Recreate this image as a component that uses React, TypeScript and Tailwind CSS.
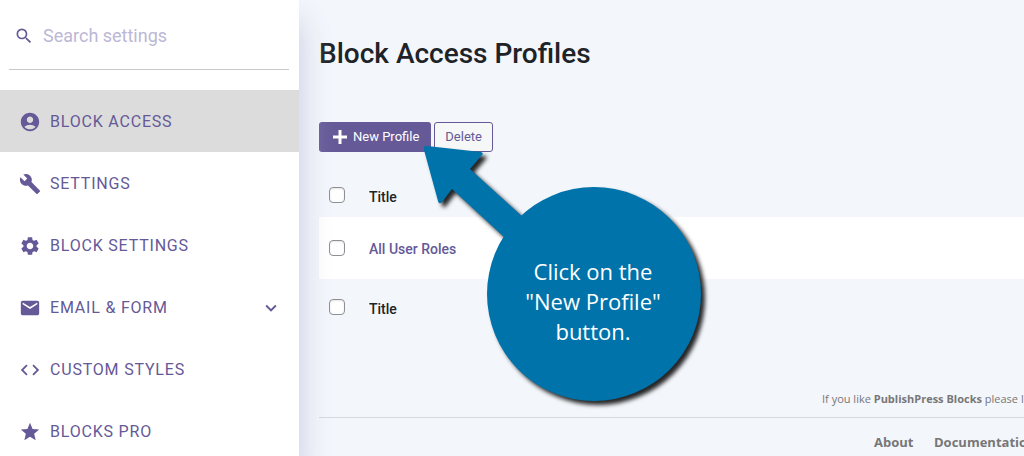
import type { IconType } from 'react-icons';
import {
    MdAccountCircle,
    MdBuild,
    MdCode,
    MdEmail,
    MdExpandMore,
    MdSearch,
    MdSettings,
    MdStar,
} from 'react-icons/md';
import clsx from 'clsx';

interface MenuItem {
    label: string;
    icon: IconType;
    active?: boolean;
    expandable?: boolean;
}

const menu: MenuItem[] = [
    { label: 'BLOCK ACCESS', icon: MdAccountCircle, active: true },
    { label: 'SETTINGS', icon: MdBuild },
    { label: 'BLOCK SETTINGS', icon: MdSettings },
    { label: 'EMAIL & FORM', icon: MdEmail, expandable: true },
    { label: 'CUSTOM STYLES', icon: MdCode },
    { label: 'BLOCKS PRO', icon: MdStar },
];

function Sidebar() {
    return (
        <aside className="relative z-10 w-[299px] shrink-0 bg-white text-[#655997] shadow-[0_20px_30px_#c8cae0]">
            <label className="mr-[10px] mb-5 ml-[9px] flex h-[70px] items-center gap-[9px] border-b border-[#c8c8c8] pt-0.5 pl-[5px]">
                <MdSearch className="size-5 shrink-0" />
                <input
                    type="search"
                    aria-label="Search settings"
                    placeholder="Search settings"
                    className="w-full min-w-0 bg-transparent text-lg outline-hidden placeholder:text-[#bcb7d6]"
                />
            </label>

            <nav>
                {menu.map(({ label, icon: Icon, active, expandable }) => (
                    <a
                        key={label}
                        href="#"
                        className={clsx(
                            'flex h-[62px] items-center gap-[9px] pt-px pr-[17px] pl-[19px] tracking-wider',
                            active && 'bg-[#dcdcdc]',
                        )}
                    >
                        <Icon className="size-[22px]" />
                        {label}
                        {expandable && (
                            <MdExpandMore className="ml-auto size-[22px]" />
                        )}
                    </a>
                ))}
            </nav>
        </aside>
    );
}

function Checkbox({ label }: { label: string }) {
    return (
        <input
            type="checkbox"
            aria-label={label}
            className="block size-4 appearance-none rounded-[4px] border border-[#8c8f94] bg-white shadow-[inset_0_1px_2px_rgba(0,0,0,0.1)]"
        />
    );
}

function ProfilesTable() {
    return (
        <table className="mt-[21px] w-full text-left text-sm font-medium">
            <thead>
                <tr className="h-11">
                    <th className="w-[50px] pl-[10px]">
                        <Checkbox label="Select all" />
                    </th>
                    <th className="pt-1 font-medium text-[#1d2327]">Title</th>
                </tr>
            </thead>
            <tbody>
                <tr className="h-[62px] bg-white">
                    <td className="pl-[10px]">
                        <Checkbox label="Select All User Roles" />
                    </td>
                    <td className="pt-0.5">
                        <a href="#" className="text-[#655997]">
                            All User Roles
                        </a>
                    </td>
                </tr>
            </tbody>
            <tfoot>
                <tr className="h-14">
                    <th className="pl-[10px]">
                        <Checkbox label="Select all" />
                    </th>
                    <th className="pt-1 font-medium text-[#1d2327]">Title</th>
                </tr>
            </tfoot>
        </table>
    );
}

function Footer() {
    return (
        <footer className="mt-14 overflow-hidden font-['Open_Sans',sans-serif] whitespace-nowrap text-[#777]">
            <p className="ml-auto w-[202px] text-[11px] leading-4">
                If you like <strong className="font-bold">PublishPress Blocks</strong> please leave us a
                rating
            </p>
            <ul className="mt-[10px] flex border-t border-[#d5d8dc] pt-[14px] text-[13px] leading-5 font-bold">
                <li className="ml-auto w-[60px] shrink-0">
                    <a href="#">About</a>
                </li>
                <li className="w-[90px] shrink-0">
                    <a href="#">Documentation</a>
                </li>
            </ul>
        </footer>
    );
}

function Callout() {
    return (
        <div className="pointer-events-none absolute top-[147px] left-[424px] z-20 h-[254px] w-[278px]">
            <svg
                viewBox="0 0 278 254"
                className="absolute inset-0 size-full overflow-visible fill-[#0073aa] drop-shadow-[4px_4px_2px_rgba(0,0,0,0.85)]"
            >
                <path d="M3 -1 L57 5 Q60 6 58 8 L46 22 L99 70 L80 90 L28 42 L18 55 Q15 58 14 54 L0 3 Q-1 -2 3 -1 Z" />
                <circle cx="170" cy="147" r="107" />
            </svg>
            <p className="relative mt-[109px] ml-[60px] text-center font-['Open_Sans',sans-serif] text-[22px] leading-[30px] text-white">
                Click on the
                <br />
                "New Profile"
                <br />
                button.
            </p>
        </div>
    );
}

export default function App() {
    return (
        <div className="relative flex min-h-screen overflow-hidden bg-[#f3f6fb] font-[Roboto,sans-serif]">
            <Sidebar />
            <main className="min-w-0 flex-1 pl-5">
                <h1 className="mt-9 text-[28px] leading-9 font-medium text-[#1d2327]">
                    Block Access Profiles
                </h1>
                <div className="mt-[50px] flex gap-[3px] text-[13px]">
                    <button
                        type="button"
                        className="flex h-[30px] items-center gap-[6px] rounded-[3px] bg-[#655997] pr-3 pl-[14px] text-white"
                    >
                        <svg
                            viewBox="0 0 14 14"
                            className="size-[14px] fill-none stroke-current stroke-3"
                        >
                            <path d="M7 0v14M0 7h14" />
                        </svg>
                        New Profile
                    </button>
                    <button
                        type="button"
                        className="h-[30px] rounded-[3px] border border-[#655997] bg-[#f6f7f7] px-[10px] text-[#655997]"
                    >
                        Delete
                    </button>
                </div>
                <ProfilesTable />
                <Footer />
            </main>
            <Callout />
        </div>
    );
}
